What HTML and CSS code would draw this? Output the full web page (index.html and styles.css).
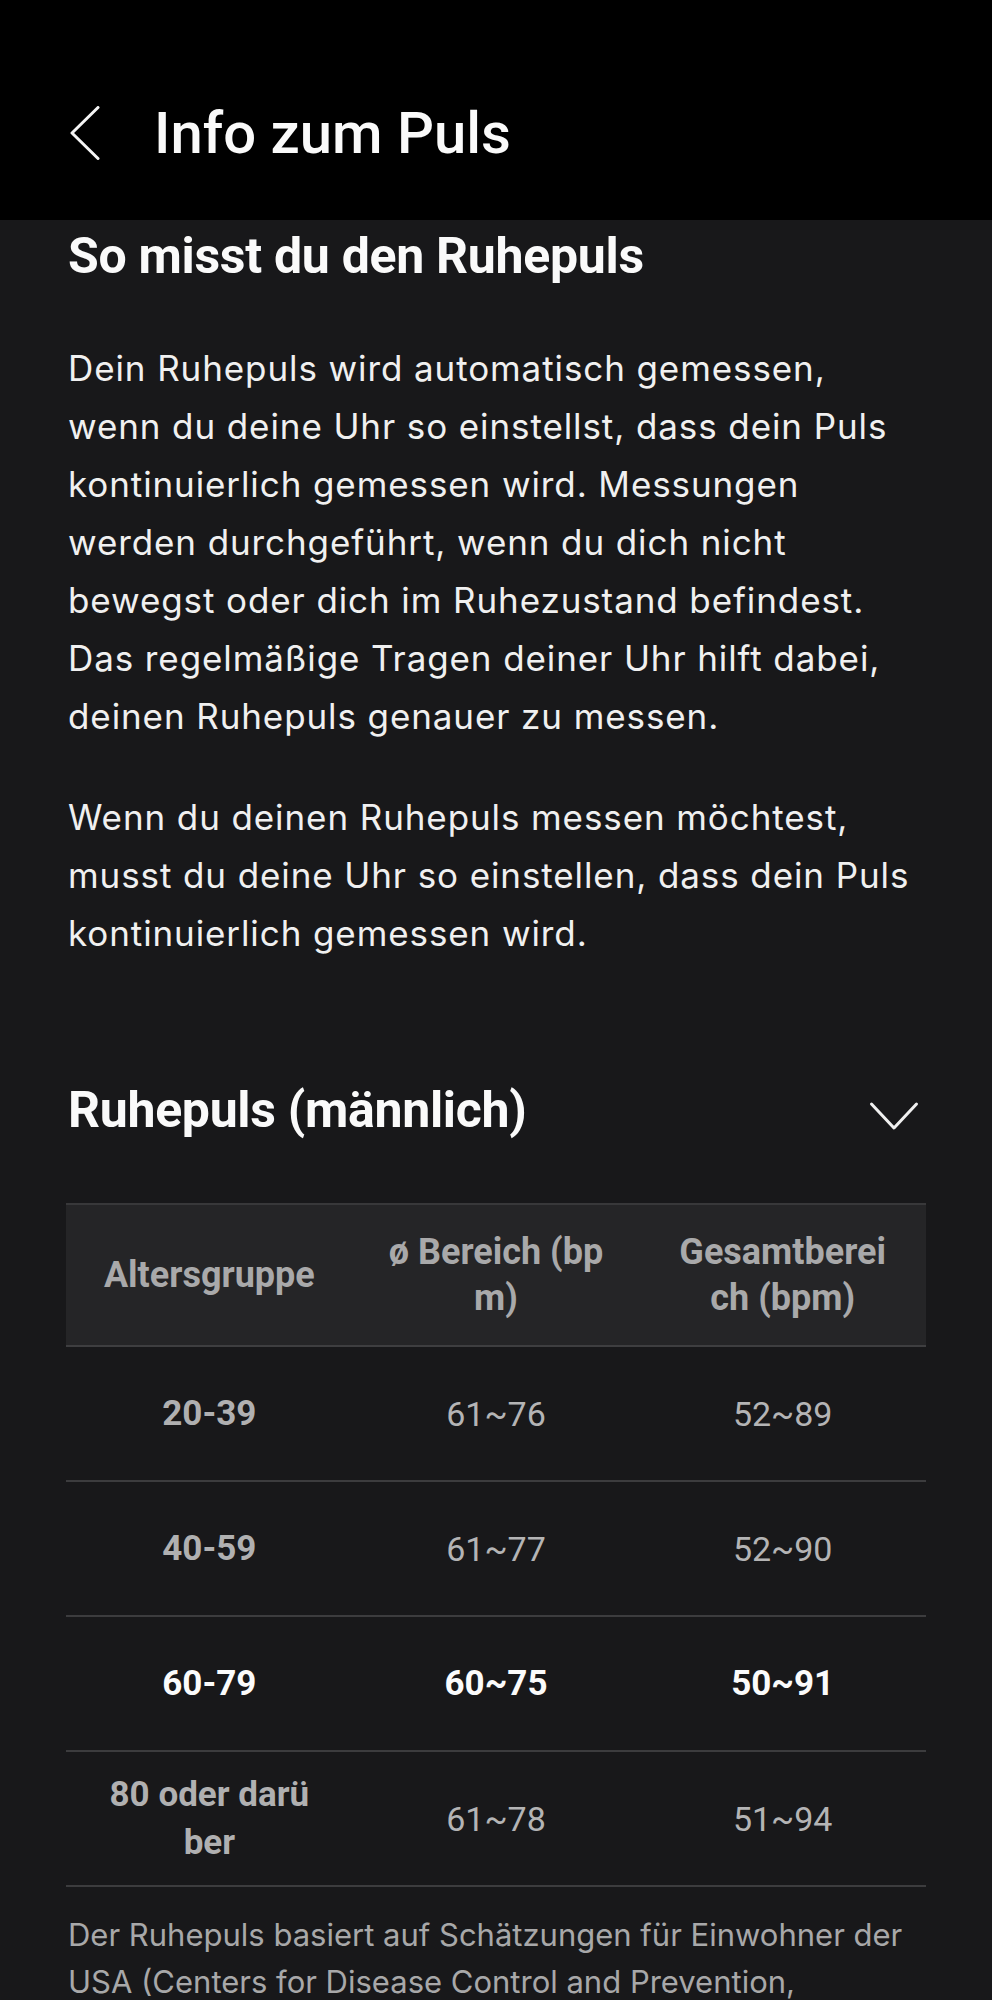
FILE: index.html
```html
<!DOCTYPE html>
<html lang="de">
<head>
<meta charset="utf-8">
<title>Info zum Puls</title>
<link rel="stylesheet" href="styles.css">
</head>
<body>
<header class="appbar">
  <button class="back" aria-label="Zurück">
    <svg width="30" height="54" viewBox="0 0 30 54"><path d="M28 1.5 L2 27 L28 52.5" fill="none" stroke="#f5f5f5" stroke-width="3" stroke-linecap="round" stroke-linejoin="round"/></svg>
  </button>
  <h1 class="appbar-title">Info zum Puls</h1>
</header>
<main class="content">
  <h2 class="section-title first">So misst du den Ruhepuls</h2>
  <div class="prose">
    <p>Dein Ruhepuls wird automatisch gemessen,<br>wenn du deine Uhr so einstellst, dass dein Puls<br>kontinuierlich gemessen wird. Messungen<br>werden durchgeführt, wenn du dich nicht<br>bewegst oder dich im Ruhezustand befindest.<br>Das regelmäßige Tragen deiner Uhr hilft dabei,<br>deinen Ruhepuls genauer zu messen.</p>
    <p>Wenn du deinen Ruhepuls messen möchtest,<br>musst du deine Uhr so einstellen, dass dein Puls<br>kontinuierlich gemessen wird.</p>
  </div>
  <div class="collapse-head">
    <h2 class="section-title">Ruhepuls (männlich)</h2>
    <svg class="chevron-down" width="50" height="30" viewBox="0 0 50 30"><path d="M2.5 3 L25 27 L47.5 3" fill="none" stroke="#f0f0f0" stroke-width="3" stroke-linecap="round" stroke-linejoin="round"/></svg>
  </div>
  <table class="pulse-table">
    <thead>
      <tr>
        <th>Altersgruppe</th>
        <th>ø Bereich (bp<br>m)</th>
        <th>Gesamtberei<br>ch (bpm)</th>
      </tr>
    </thead>
    <tbody>
      <tr><td class="age">20-39</td><td>61~76</td><td>52~89</td></tr>
      <tr><td class="age">40-59</td><td>61~77</td><td>52~90</td></tr>
      <tr class="current"><td class="age">60-79</td><td>60~75</td><td>50~91</td></tr>
      <tr><td class="age">80 oder darü<br>ber</td><td>61~78</td><td>51~94</td></tr>
    </tbody>
  </table>
  <p class="note">Der Ruhepuls basiert auf Schätzungen für Einwohner der USA (Centers for Disease Control and Prevention, National Center for Health Statistics).</p>
</main>
</body>
</html>
```
FILE: styles.css
```css
* { box-sizing: border-box; }

body {
  margin: 0;
  background: #18181a;
  color: #f2f2f2;
  font-family: Roboto, "Noto Sans", "Liberation Sans", sans-serif;
}

.appbar {
  height: 220px;
  background: #000;
  display: flex;
  align-items: center;
  padding: 46px 0 0 70px;
}

.back {
  background: none;
  border: 0;
  padding: 0;
  margin: 0;
  width: 30px;
  height: 54px;
  display: flex;
}

.appbar-title {
  margin: 0 0 0 54px;
  font-size: 58px;
  line-height: 58px;
  font-weight: 500;
  color: #fafafa;
}

.content {
  padding: 0 66px;
}

.section-title {
  margin: 0;
  font-size: 50px;
  line-height: 60px;
  font-weight: 700;
  color: #fafafa;
  padding-left: 2px;
  letter-spacing: -0.3px;
}

.section-title.first {
  margin-top: 6px;
}

.prose {
  margin-top: 53px;
  padding-left: 2px;
  font-family: Inter, Roboto, "Noto Sans", sans-serif;
}

.prose p {
  margin: 0 0 43px;
  font-size: 35px;
  line-height: 58px;
  letter-spacing: 0.9px;
  color: #f0f0f0;
}

.prose p:last-child {
  margin-bottom: 0;
}

.collapse-head {
  margin-top: 118px;
  display: flex;
  align-items: center;
  justify-content: space-between;
}

.chevron-down {
  margin: 12px 7px 0 0;
}

.pulse-table {
  margin-top: 63px;
  width: 100%;
  border-collapse: collapse;
  table-layout: fixed;
}

.pulse-table th {
  background: #252527;
  border-top: 2px solid #38383a;
  border-bottom: 2px solid #3e3e40;
  height: 142px;
  padding: 0 8px;
  font-size: 36px;
  line-height: 46px;
  font-weight: 700;
  color: #a9a9aa;
  text-align: center;
  vertical-align: middle;
}

.pulse-table td {
  height: 135px;
  border-bottom: 2px solid #3c3c3e;
  padding: 0 8px;
  font-size: 34px;
  line-height: 48px;
  color: #b4b4b5;
  text-align: center;
  vertical-align: middle;
}

.pulse-table td.age {
  font-weight: 700;
  font-size: 35px;
  color: #b0b0b1;
}

.pulse-table tr.current td {
  font-weight: 700;
  font-size: 35px;
  color: #fbfbfb;
}

.note {
  margin: 24px 0 0;
  padding: 0 14px 0 2px;
  font-family: Inter, Roboto, "Noto Sans", sans-serif;
  font-size: 31px;
  line-height: 47px;
  color: #a8a8a9;
}
```
